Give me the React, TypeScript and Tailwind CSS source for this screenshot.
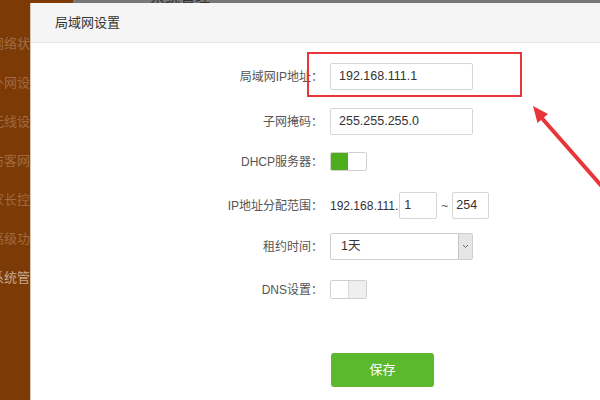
import React from "react";

const cjk = { fontFamily: '"Liberation Sans", "Noto Sans CJK SC", sans-serif' };

function Label({ children }: { children: React.ReactNode }) {
  return (
    <div className="w-[292px] shrink-0 text-right text-[12px] text-[#555]" style={cjk}>
      {children}
    </div>
  );
}

export default function App() {
  const side = ["网络状态", "外网设置", "无线设置", "访客网络", "家长控制", "高级功能", "系统管理"];
  return (
    <div className="relative w-[600px] h-[400px] overflow-hidden bg-white" style={cjk}>
      {/* top strip of page behind */}
      <div className="flex h-[3px] overflow-hidden">
        <div className="w-[73px] bg-[#7b3a06]" />
        <div className="flex-1 bg-[#777] relative">
          <div className="absolute left-[77px] top-[-14px] text-[15px] text-[#333] whitespace-nowrap">系统管理</div>
        </div>
      </div>
      <div className="flex h-[397px]">
        {/* sidebar */}
        <div className="w-[30px] shrink-0 bg-[#7b3a06] overflow-hidden pt-[31px] flex flex-col gap-[20px]">
          {side.map((s, i) => (
            <div
              key={s}
              className={`ml-[-9px] whitespace-nowrap text-[13px] leading-[19px] ${i === 6 ? "text-[#c9ab93]" : "text-[#a26a40]"}`}
            >
              {s}
            </div>
          ))}
        </div>
        {/* modal */}
        <div className="flex-1 border-l border-[#d9c6b6] bg-white flex flex-col">
          <div className="h-[40px] bg-[#f5f5f5] border-b border-[#e6e6e6] flex items-center pl-[24px] text-[13px] text-[#333]">
            局域网设置
          </div>
          <div className="flex flex-col">
            <div className="mt-[20px] h-[27px] flex items-center">
              <Label>局域网IP地址：</Label>
              <div className="ml-[7px] w-[143px] h-[27px] border border-[#d6d6d6] rounded-[2px] flex items-center pl-[8px] text-[12.5px] text-[#333]">
                192.168.111.1
              </div>
            </div>
            <div className="mt-[18px] h-[27px] flex items-center">
              <Label>子网掩码：</Label>
              <div className="ml-[7px] w-[143px] h-[27px] border border-[#d6d6d6] rounded-[2px] flex items-center pl-[8px] text-[12.5px] text-[#333]">
                255.255.255.0
              </div>
            </div>
            <div className="mt-[13px] h-[27px] flex items-center">
              <Label>DHCP服务器：</Label>
              <div className="ml-[7px] w-[37px] h-[19px] border border-[#d0d0d0] rounded-[2px] flex overflow-hidden">
                <div className="w-[17px] bg-[#4cae1c]" />
                <div className="flex-1 bg-white" />
              </div>
            </div>
            <div className="mt-[17px] h-[27px] flex items-center">
              <Label>IP地址分配范围：</Label>
              <div className="ml-[7px] text-[12px] text-[#333]">192.168.111.</div>
              <div className="ml-[1px] w-[38px] h-[27px] border border-[#d6d6d6] rounded-[2px] flex items-center pl-[4px] text-[12.5px] text-[#333]">
                1
              </div>
              <div className="mx-[4px] text-[12px] text-[#555]">~</div>
              <div className="w-[37px] h-[27px] border border-[#d6d6d6] rounded-[2px] flex items-center pl-[3px] text-[12.5px] text-[#333]">
                254
              </div>
            </div>
            <div className="mt-[14px] h-[27px] flex items-center">
              <Label>租约时间：</Label>
              <div className="ml-[7px] w-[143px] h-[27px] border border-[#cfcfcf] rounded-[2px] flex items-stretch text-[12.5px] text-[#333]">
                <div className="flex-1 flex items-center pl-[10px]">1天</div>
                <div className="w-[14px] border-l border-[#c4c4c4] bg-[#e6e6e6] flex items-center justify-center">
                  <svg width="7" height="5" viewBox="0 0 7 5">
                    <path d="M1 1 L3.5 3.5 L6 1" stroke="#666" strokeWidth="1" fill="none" />
                  </svg>
                </div>
              </div>
            </div>
            <div className="mt-[16px] h-[27px] flex items-center">
              <Label>DNS设置：</Label>
              <div className="ml-[7px] w-[37px] h-[19px] border border-[#d0d0d0] rounded-[2px] flex overflow-hidden">
                <div className="w-[18px] bg-white border-r border-[#d8d8d8]" />
                <div className="flex-1 bg-[#efefef]" />
              </div>
            </div>
            <div className="mt-[50px] flex">
              <div className="ml-[300px] w-[103px] h-[34px] rounded-[3px] bg-[#5cb82c] flex items-center justify-center text-[13px] text-white">
                保存
              </div>
            </div>
          </div>
        </div>
      </div>
      {/* annotation */}
      <div className="absolute left-[307px] top-[52px] w-[215px] h-[45px] border-2 border-[#e8353a]" />
      <svg className="absolute left-0 top-0" width="600" height="400" viewBox="0 0 600 400">
        <line x1="540" y1="116" x2="612" y2="198" stroke="#e8353a" strokeWidth="4" />
        <polygon points="533,106 537.5,123 548,114" fill="#e8353a" />
      </svg>
    </div>
  );
}
